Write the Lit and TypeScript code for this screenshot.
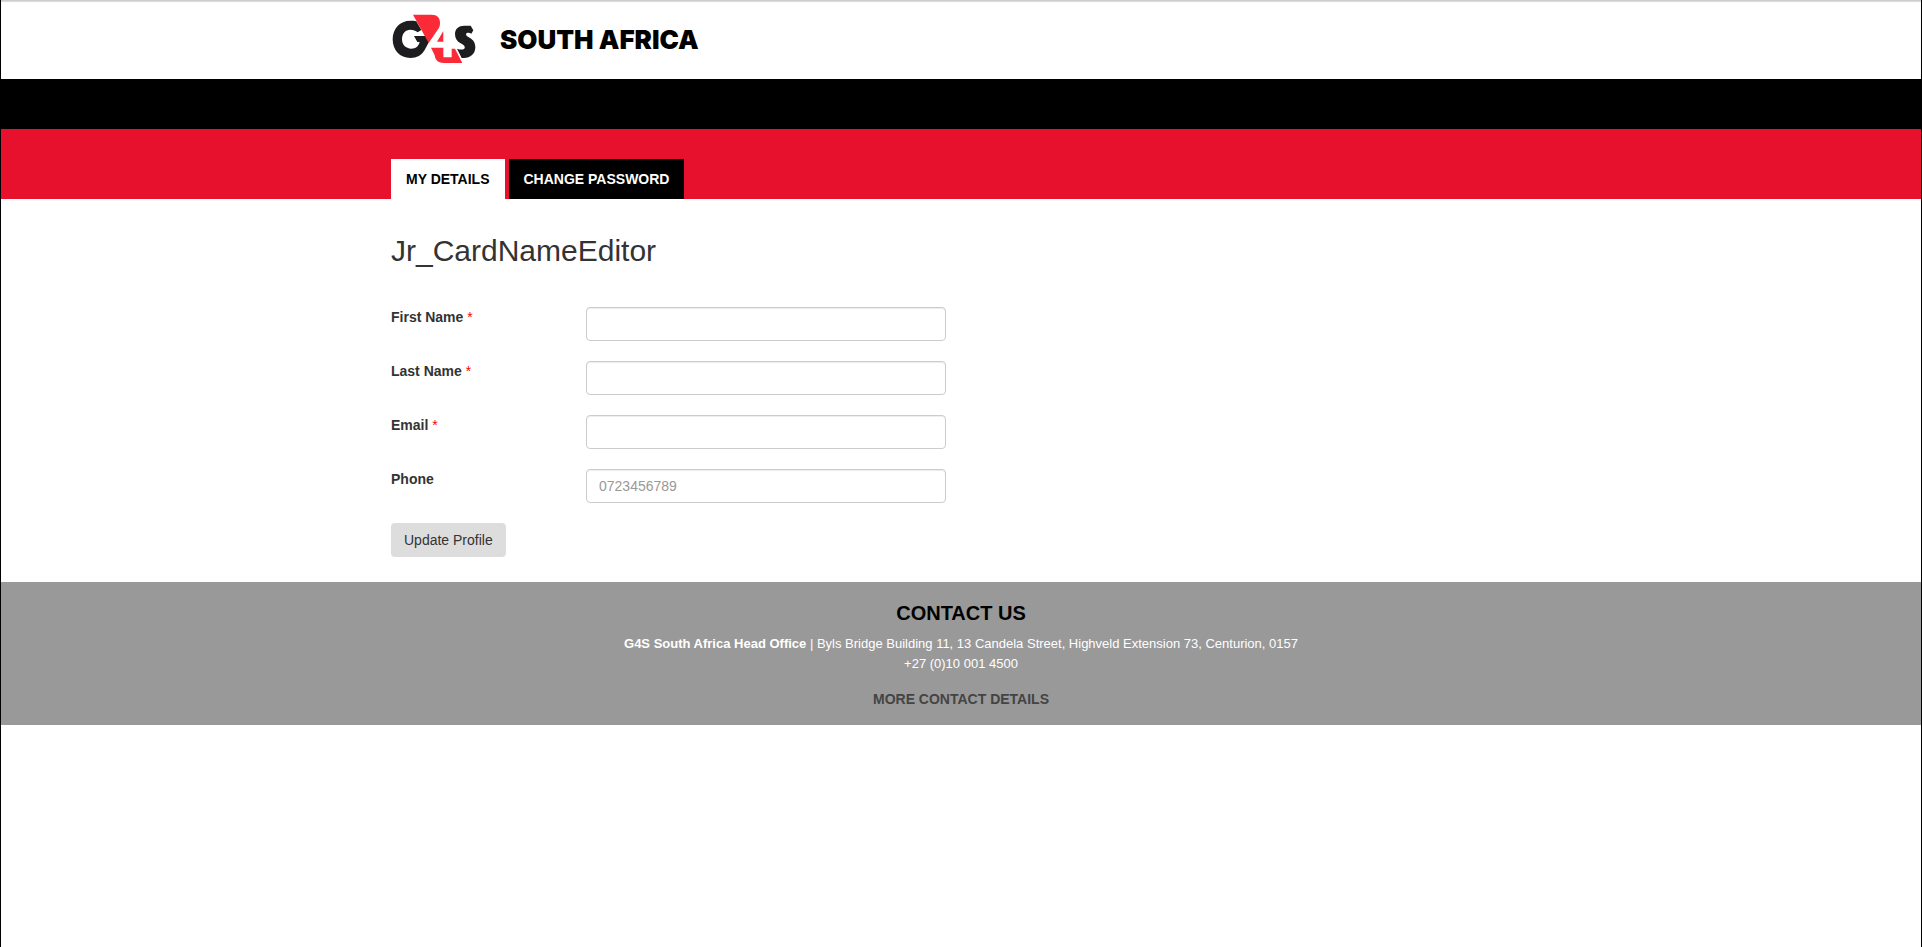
import { LitElement, html, css } from "lit";
import { customElement, property } from "lit/decorators.js";

@customElement("brand-logo")
class BrandLogo extends LitElement {
  static styles = css`
    :host {
      display: block;
    }
    svg {
      display: block;
    }
  `;

  render() {
    return html`
      <svg width="86" height="54" viewBox="0 0 258 162" role="img" aria-label="G4S">
        <path
          fill="#1d1d1f"
          d="M76 28 C70 26 64 26 58 26 C27 26 5 50 5 82 C5 115 27 138 58 138 C78 138 92 130 101 114 L115 88 L107 72 H69 L79 90 H86 C83 103 74 110 61 110 C44 110 33 98 33 82 C33 65 43 53 58 53 C67 53 74 56 80 61 L91 54 Z"
        />
        <path fill="#fb2a37" d="M66 8 H122 C139 8 147 17 147 32 C147 42 145 46 140 53 L113 93 Z" />
        <path fill="#fb2a37" d="M157 57 V89 H138 Z" />
        <path fill="#fb2a37" d="M120 107 H157 V136 H182 V110 H192 L214 153 H159 C141 153 133 145 131 130 Z" />
        <path
          fill="#1d1d1f"
          d="M239 41 L247 55 L241 65 C234 61 225 62 225 67 C225 72 230 74 237 78 C247 84 253 92 253 106 C253 126 238 138 219 138 H212 L198 110 C206 113 219 115 221 108 C223 102 216 98 209 94 C198 88 192 79 192 66 C192 50 204 41 219 41 Z"
        />
      </svg>
    `;
  }
}

@customElement("form-field")
class FormField extends LitElement {
  @property() label = "";
  @property() name = "";
  @property() type = "text";
  @property() placeholder = "";
  @property({ type: Boolean }) required = false;

  static styles = css`
    :host {
      display: grid;
      grid-template-columns: 195px minmax(0, 360px);
      align-items: start;
    }
    label {
      font-weight: 700;
      line-height: 20px;
    }
    .mark {
      color: #f00;
      font-weight: 400;
    }
    input {
      box-sizing: border-box;
      width: 100%;
      height: 34px;
      padding: 6px 12px;
      border: 1px solid #ccc;
      border-radius: 4px;
      background: #fff;
      box-shadow: inset 0 1px 1px rgba(0, 0, 0, 0.075);
      color: #555;
      font: inherit;
    }
    input::placeholder {
      color: #999;
    }
  `;

  render() {
    return html`
      <label for="control">${this.label} ${this.required ? html`<span class="mark">*</span>` : ""}</label>
      <input
        id="control"
        name=${this.name}
        type=${this.type}
        placeholder=${this.placeholder}
        ?required=${this.required}
      />
    `;
  }
}

@customElement("app-root")
class AppRoot extends LitElement {
  static styles = css`
    :host {
      display: block;
      box-sizing: border-box;
      min-height: 100vh;
      border: solid #000;
      border-width: 0 1px;
      background: #fff;
      color: #333;
      font: 14px/20px "Liberation Sans", Arial, sans-serif;
    }
    .container {
      box-sizing: border-box;
      max-width: 1170px;
      margin: 0 auto;
      padding: 0 15px;
    }
    .top {
      border-top: 1px solid #ccc;
      box-shadow: inset 0 1px 1px rgba(0, 0, 0, 0.15);
    }
    .brand {
      display: flex;
      align-items: center;
      gap: 23px;
      height: 76px;
      padding-bottom: 2px;
      color: #000;
      text-decoration: none;
    }
    .region {
      padding-top: 2px;
      font: 900 26px/30px Inter, Roboto, sans-serif;
    }
    .menu {
      height: 50px;
      background: #000;
    }
    .banner {
      padding-top: 30px;
      background: #e8112d;
    }
    .tabs {
      display: flex;
      gap: 4px;
    }
    .tab {
      padding: 10px 15px;
      background: #000;
      color: #fff;
      font-weight: 700;
      text-decoration: none;
    }
    .tab.active {
      background: #fff;
      color: #000;
    }
    h1 {
      margin: 0;
      padding: 35px 0 39px;
      font-size: 30px;
      line-height: 34px;
      font-weight: 400;
    }
    form {
      display: grid;
      justify-items: start;
      gap: 20px;
      padding-bottom: 25px;
    }
    form-field {
      width: 100%;
    }
    button {
      height: 34px;
      padding: 6px 13px;
      border: 0;
      border-radius: 4px;
      background: #ddd;
      color: #333;
      font: inherit;
    }
    footer {
      padding: 20px 0 15px;
      background: #999;
      color: #fff;
      font-size: 13px;
      text-align: center;
    }
    h2 {
      margin: 0 0 10px;
      color: #000;
      font-size: 20px;
      line-height: 22px;
    }
    p {
      margin: 0 0 15px;
    }
    .more {
      color: #444;
      font-size: 14px;
      font-weight: 700;
      text-decoration: none;
    }
  `;

  render() {
    return html`
      <header class="top">
        <div class="container">
          <a class="brand" href="#">
            <brand-logo></brand-logo>
            <span class="region">SOUTH AFRICA</span>
          </a>
        </div>
      </header>
      <div class="menu"></div>
      <div class="banner">
        <nav class="container tabs">
          <a class="tab active" href="#details">MY DETAILS</a>
          <a class="tab" href="#password">CHANGE PASSWORD</a>
        </nav>
      </div>
      <main class="container">
        <h1>Jr_CardNameEditor</h1>
        <form>
          <form-field label="First Name" name="firstName" required></form-field>
          <form-field label="Last Name" name="lastName" required></form-field>
          <form-field label="Email" name="email" type="email" required></form-field>
          <form-field label="Phone" name="phone" type="tel" placeholder="0723456789"></form-field>
          <button type="button">Update Profile</button>
        </form>
      </main>
      <footer>
        <div class="container">
          <h2>CONTACT US</h2>
          <p>
            <strong>G4S South Africa Head Office</strong> | Byls Bridge Building 11, 13 Candela Street, Highveld
            Extension 73, Centurion, 0157<br />+27 (0)10 001 4500
          </p>
          <a class="more" href="#contact">MORE CONTACT DETAILS</a>
        </div>
      </footer>
    `;
  }
}
